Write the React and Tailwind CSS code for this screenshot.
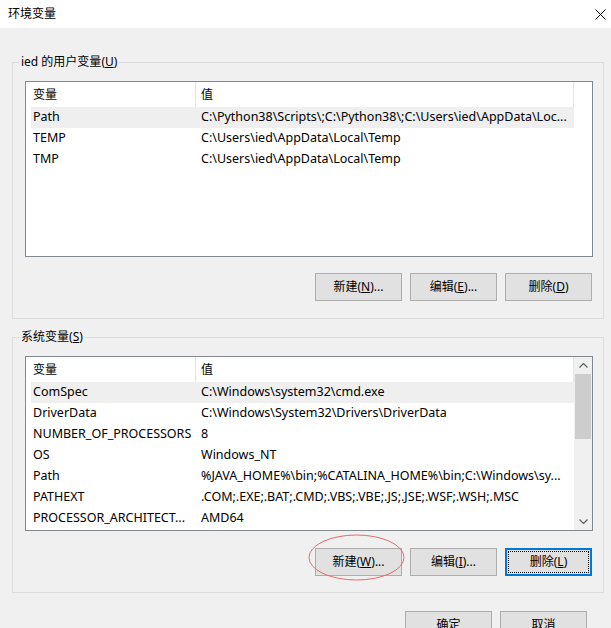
import React from "react";

const userVars = [
  ["Path", "C:\\Python38\\Scripts\\;C:\\Python38\\;C:\\Users\\ied\\AppData\\Loc..."],
  ["TEMP", "C:\\Users\\ied\\AppData\\Local\\Temp"],
  ["TMP", "C:\\Users\\ied\\AppData\\Local\\Temp"],
];

const systemVars = [
  ["ComSpec", "C:\\Windows\\system32\\cmd.exe"],
  ["DriverData", "C:\\Windows\\System32\\Drivers\\DriverData"],
  ["NUMBER_OF_PROCESSORS", "8"],
  ["OS", "Windows_NT"],
  ["Path", "%JAVA_HOME%\\bin;%CATALINA_HOME%\\bin;C:\\Windows\\sy..."],
  ["PATHEXT", ".COM;.EXE;.BAT;.CMD;.VBS;.VBE;.JS;.JSE;.WSF;.WSH;.MSC"],
  ["PROCESSOR_ARCHITECT...", "AMD64"],
];

const Chevron = ({ down }) => (
  <svg width="9" height="5" viewBox="0 0 9 5" className={down ? "rotate-180" : ""}>
    <polyline points="0.5,4.5 4.5,0.5 8.5,4.5" fill="none" stroke="#606060" strokeWidth="1.2" />
  </svg>
);

const Scrollbar = () => (
  <div className="flex w-[18px] flex-col bg-[#f0f0f0]">
    <div className="flex h-[17px] items-center justify-center">
      <Chevron />
    </div>
    <div className="mx-[1px] h-[65px] bg-[#cdcdcd]" />
    <div className="flex-grow" />
    <div className="flex h-[17px] items-center justify-center">
      <Chevron down />
    </div>
  </div>
);

// list view with a header, first row shown as selected
const VarList = ({ rows, height, scroll }) => (
  <div className={`flex border border-[#828790] bg-white ${height}`}>
    <div className="flex w-[548px] flex-col">
      <div className="flex h-[25px] shrink-0">
        <div className="flex w-[170px] items-center border-r border-[#e5e5e5] pl-[7px]">变量</div>
        <div className="flex w-[378px] items-center border-r border-[#e5e5e5] pl-[5px]">值</div>
      </div>
      {rows.map(([name, value], i) => (
        <div
          key={name + i}
          className={`ml-[5px] flex h-[21px] shrink-0 items-center whitespace-nowrap text-[12.5px] ${
            i === 0 ? "bg-[#efefef]" : ""
          }`}
        >
          <div className="w-[165px] overflow-hidden pl-[2px]">{name}</div>
          <div className="w-[373px] overflow-hidden pl-[5px]">{value}</div>
        </div>
      ))}
    </div>
    {scroll && <Scrollbar />}
  </div>
);

const Btn = ({ label, keyChar, tail = "", focused = false }) => (
  <button
    className={`h-[28px] w-[87px] bg-[#e1e1e1] text-[12px] leading-none ${
      focused
        ? "border-2 border-[#0078d7] outline-1 outline-dotted outline-black -outline-offset-4"
        : "border border-[#adadad]"
    }`}
  >
    {label}(<u className="underline-offset-1">{keyChar}</u>){tail}
  </button>
);

const Group = ({ title, keyChar, className, children }) => (
  <fieldset className={`ml-[12px] w-[592px] border border-[#dcdcdc] p-0 ${className}`}>
    <legend className="ml-[6px] px-[2px] leading-[16px]">
      {title}(<u className="underline-offset-1">{keyChar}</u>)
    </legend>
    {children}
  </fieldset>
);

export default function App() {
  return (
    <div className="h-[628px] w-[611px] overflow-hidden bg-[#f0f0f0] font-['Noto_Sans','Noto_Sans_CJK_SC',sans-serif] text-[12px] text-black">
      <div className="flex h-[28px] items-center justify-between bg-white pl-[8px] pr-[5px]">
        <span>环境变量</span>
        <svg width="11" height="11" viewBox="0 0 11 11">
          <path d="M0.5 0.5 L10.5 10.5 M10.5 0.5 L0.5 10.5" stroke="#000" strokeWidth="1" />
        </svg>
      </div>

      <Group title="ied 的用户变量" keyChar="U" className="mt-[26px]">
        <div className="pb-[17px] pl-[12px] pr-[10px] pt-[11px]">
          <VarList rows={userVars} height="h-[176px]" />
          <div className="mt-[16px] flex justify-end gap-[8px] pr-[1px]">
            <Btn label="新建" keyChar="N" tail="..." />
            <Btn label="编辑" keyChar="E" tail="..." />
            <Btn label="删除" keyChar="D" />
          </div>
        </div>
      </Group>

      <Group title="系统变量" keyChar="S" className="mt-[10px]">
        <div className="pb-[16px] pl-[12px] pr-[10px] pt-[11px]">
          <VarList rows={systemVars} height="h-[175px]" scroll />
          <div className="mt-[17px] flex justify-end gap-[8px] pr-[1px]">
            <div className="relative">
              <Btn label="新建" keyChar="W" tail="..." />
              <svg
                width="97"
                height="47"
                viewBox="0 0 97 47"
                className="pointer-events-none absolute left-[-7px] top-[-14px]"
              >
                <ellipse cx="48.5" cy="23.5" rx="47.5" ry="22.5" fill="none" stroke="#e86a6a" strokeWidth="1" />
              </svg>
            </div>
            <Btn label="编辑" keyChar="I" tail="..." />
            <Btn label="删除" keyChar="L" focused />
          </div>
        </div>
      </Group>

      <div className="mt-[18px] flex justify-end gap-[8px] pr-[24px]">
        <button className="h-[28px] w-[87px] border border-[#adadad] bg-[#e1e1e1]">确定</button>
        <button className="h-[28px] w-[87px] border border-[#adadad] bg-[#e1e1e1]">取消</button>
      </div>
    </div>
  );
}
